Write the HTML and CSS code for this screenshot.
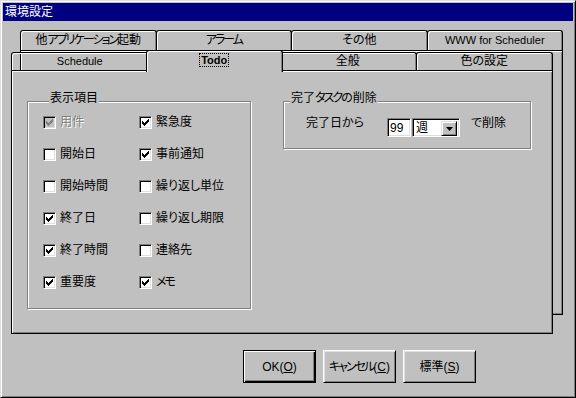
FILE: index.html
```html
<!DOCTYPE html>
<html lang="ja">
<head>
  <meta charset="UTF-8" />
  <meta name="viewport" content="width=device-width, initial-scale=1.0" />
  <title>環境設定</title>
  <link rel="stylesheet" href="styles.css">
</head>
<body>
  <div class="dialog">
    <div class="title-bar">環境設定</div>

    <div class="sheets">
      <div class="sheet sheet-back">
        <div class="tab-row">
          <div class="tab">他<span class="kana">アプリケーション</span>起動</div>
          <div class="tab"><span class="kana">アラーム</span></div>
          <div class="tab">その他</div>
          <div class="tab latin">WWW for Scheduler</div>
        </div>
        <div class="panel"></div>
      </div>

      <div class="sheet sheet-front">
        <div class="tab-row">
          <div class="tab latin">Schedule</div>
          <div class="tab active"><span class="focus">Todo</span></div>
          <div class="tab">全般</div>
          <div class="tab">色の設定</div>
        </div>

        <div class="panel panel-todo">
          <div class="group group-items">
            <div class="group-title">表示項目</div>
            <div class="check-grid">
              <div class="check disabled">
                <span class="box"><svg width="7" height="7" viewBox="0 0 7 7"><path d="M0 2h1v3H0zM1 3h1v3H1zM2 4h1v3H2zM3 3h1v3H3zM4 2h1v3H4zM5 1h1v3H5zM6 0h1v3H6z"/></svg></span>
                <span class="check-label">用件</span>
              </div>
              <div class="check">
                <span class="box"><svg width="7" height="7" viewBox="0 0 7 7"><path d="M0 2h1v3H0zM1 3h1v3H1zM2 4h1v3H2zM3 3h1v3H3zM4 2h1v3H4zM5 1h1v3H5zM6 0h1v3H6z"/></svg></span>
                <span class="check-label">緊急度</span>
              </div>
              <div class="check">
                <span class="box"></span>
                <span class="check-label">開始日</span>
              </div>
              <div class="check">
                <span class="box"><svg width="7" height="7" viewBox="0 0 7 7"><path d="M0 2h1v3H0zM1 3h1v3H1zM2 4h1v3H2zM3 3h1v3H3zM4 2h1v3H4zM5 1h1v3H5zM6 0h1v3H6z"/></svg></span>
                <span class="check-label">事前通知</span>
              </div>
              <div class="check">
                <span class="box"></span>
                <span class="check-label">開始時間</span>
              </div>
              <div class="check">
                <span class="box"></span>
                <span class="check-label">繰り返し単位</span>
              </div>
              <div class="check">
                <span class="box"><svg width="7" height="7" viewBox="0 0 7 7"><path d="M0 2h1v3H0zM1 3h1v3H1zM2 4h1v3H2zM3 3h1v3H3zM4 2h1v3H4zM5 1h1v3H5zM6 0h1v3H6z"/></svg></span>
                <span class="check-label">終了日</span>
              </div>
              <div class="check">
                <span class="box"></span>
                <span class="check-label">繰り返し期限</span>
              </div>
              <div class="check">
                <span class="box"><svg width="7" height="7" viewBox="0 0 7 7"><path d="M0 2h1v3H0zM1 3h1v3H1zM2 4h1v3H2zM3 3h1v3H3zM4 2h1v3H4zM5 1h1v3H5zM6 0h1v3H6z"/></svg></span>
                <span class="check-label">終了時間</span>
              </div>
              <div class="check">
                <span class="box"></span>
                <span class="check-label">連絡先</span>
              </div>
              <div class="check">
                <span class="box"><svg width="7" height="7" viewBox="0 0 7 7"><path d="M0 2h1v3H0zM1 3h1v3H1zM2 4h1v3H2zM3 3h1v3H3zM4 2h1v3H4zM5 1h1v3H5zM6 0h1v3H6z"/></svg></span>
                <span class="check-label">重要度</span>
              </div>
              <div class="check">
                <span class="box"><svg width="7" height="7" viewBox="0 0 7 7"><path d="M0 2h1v3H0zM1 3h1v3H1zM2 4h1v3H2zM3 3h1v3H3zM4 2h1v3H4zM5 1h1v3H5zM6 0h1v3H6z"/></svg></span>
                <span class="check-label"><span class="kana">メモ</span></span>
              </div>
            </div>
          </div>

          <div class="group group-delete">
            <div class="group-title">完了<span class="kana">タスク</span>の削除</div>
            <div class="delete-row">
              <span class="delete-label">完了日から</span>
              <span class="field field-num">99</span>
              <span class="field combo">
                <span class="combo-value">週</span>
                <span class="combo-btn"><svg width="7" height="4" viewBox="0 0 7 4"><path d="M0 0h7L3.5 4z"/></svg></span>
              </span>
              <span class="delete-after">で削除</span>
            </div>
          </div>
        </div>
      </div>
    </div>

    <div class="actions">
      <div class="btn default">OK(<u>O</u>)</div>
      <div class="btn"><span class="kana">キャンセル</span>(<u>C</u>)</div>
      <div class="btn">標準(<u>S</u>)</div>
    </div>
  </div>
</body>
</html>
```

FILE: styles.css
```css
* {
  margin: 0;
  padding: 0;
  box-sizing: border-box;
}

body {
  font-family: 'Liberation Sans', 'Noto Sans CJK JP', sans-serif;
  font-size: 12px;
  line-height: 14px;
  font-feature-settings: "palt";
  color: #000;
  background: #c0c0c0;
}

/* katakana in the old UI font is set narrow */
.kana {
  letter-spacing: -2px;
}

.dialog {
  width: 576px;
  height: 398px;
  background: #c0c0c0;
  border: 1px solid;
  border-color: #dfdfdf #000 #000 #dfdfdf;
  box-shadow: inset 1px 1px #fff, inset -1px -1px #808080;
  padding: 2px;
  display: flex;
  flex-direction: column;
}

.title-bar {
  height: 18px;
  line-height: 18px;
  padding-left: 2px;
  background: #000080;
  color: #fff;
}

/* two stacked property sheets */
.sheets {
  display: grid;
  width: 552px;
  margin: 9px 0 0 8px;
}

.sheet {
  grid-area: 1 / 1;
  display: flex;
  flex-direction: column;
}

.sheet-back {
  width: 543px;
  margin-left: 9px;
}

.sheet-front {
  width: 542px;
  margin-top: 20px;
}

.tab-row {
  display: flex;
  height: 20px;
}

.tab {
  flex: 1;
  height: 20px;
  border: 1px solid #000;
  border-bottom: none;
  border-radius: 3px 3px 0 0;
  box-shadow: inset 1px 1px #fff, inset -1px 0 #808080;
  text-align: center;
  line-height: 18px;
  white-space: nowrap;
}

.tab + .tab {
  margin-left: -1px;
}

.tab.latin {
  font-size: 11px;
}

.sheet-front .tab {
  height: 18px;
  margin-top: 2px;
  line-height: 16px;
}

.sheet-front .tab.active {
  position: relative;
  z-index: 1;
  height: 22px;
  margin: 0 -2px -2px -3px;
  line-height: 18px;
  background: #c0c0c0;
  font-size: 11px;
  font-weight: bold;
}

.sheet-front .tab.active + .tab {
  margin-left: -2px;
}

.focus {
  border: 1px dotted #000;
  padding: 0 1px;
}

.panel {
  border: 1px solid #000;
  box-shadow: inset 1px 1px #fff, inset -1px -1px #808080;
  background: #c0c0c0;
}

.sheet-back .panel {
  height: 265px;
}

.sheet-front .panel {
  height: 264px;
}

.panel-todo {
  display: flex;
  align-items: flex-start;
  padding: 30px 0 0 15px;
}

/* etched group box */
.group {
  border: 1px solid #808080;
  box-shadow: inset 1px 1px #fff, 1px 1px #fff;
}

.group-title {
  align-self: flex-start;
  width: max-content;
  margin: -11px 0 1px 6px;
  padding: 0 1px;
  background: #c0c0c0;
}

.group-items {
  width: 224px;
  padding: 0 0 10px 15px;
}

.check-grid {
  display: grid;
  grid-template-columns: 96px 1fr;
  grid-auto-rows: 32px;
}

.check {
  display: flex;
  align-items: center;
  gap: 4px;
}

.box {
  width: 13px;
  height: 13px;
  display: flex;
  align-items: center;
  justify-content: center;
  background: #fff;
  border: 1px solid;
  border-color: #808080 #fff #fff #808080;
  box-shadow: inset 1px 1px #000, inset -1px -1px #dfdfdf;
}

.box svg {
  fill: #000;
  shape-rendering: crispEdges;
}

.check.disabled .box {
  background: #c0c0c0;
}

.check.disabled svg {
  fill: #808080;
}

.check.disabled .check-label {
  color: #808080;
  text-shadow: 1px 1px #fff;
}

.group-delete {
  width: 248px;
  height: 48px;
  margin-left: 32px;
}

.delete-row {
  display: flex;
  align-items: flex-start;
  padding-left: 22px;
}

.delete-label {
  width: 81px;
  margin-top: 10px;
}

.field {
  height: 19px;
  margin-top: 12px;
  background: #fff;
  border: 1px solid;
  border-color: #808080 #fff #fff #808080;
  box-shadow: inset 1px 1px #000, inset -1px -1px #dfdfdf;
}

.field-num {
  width: 24px;
  padding: 2px 0 0 2px;
  line-height: 14px;
}

.combo {
  width: 48px;
  margin-left: 1px;
  display: flex;
  padding: 2px;
}

.combo-value {
  flex: 1;
  padding-left: 1px;
  line-height: 14px;
}

.combo-btn {
  width: 16px;
  height: 15px;
  display: flex;
  align-items: center;
  justify-content: center;
  background: #c0c0c0;
  border: 1px solid;
  border-color: #dfdfdf #000 #000 #dfdfdf;
  box-shadow: inset 1px 1px #fff, inset -1px -1px #808080;
}

.delete-after {
  margin: 10px 0 0 11px;
}

.actions {
  display: flex;
  gap: 7px;
  margin: 16px 0 0 240px;
}

.btn {
  width: 73px;
  height: 33px;
  display: flex;
  align-items: center;
  justify-content: center;
  white-space: nowrap;
  border: 1px solid;
  border-color: #fff #000 #000 #fff;
  box-shadow: inset 1px 1px #dfdfdf, inset -1px -1px #808080;
}

.btn.default {
  border-color: #000;
  box-shadow: inset 1px 1px #fff, inset -1px -1px #000, inset -2px -2px #808080;
}
```
